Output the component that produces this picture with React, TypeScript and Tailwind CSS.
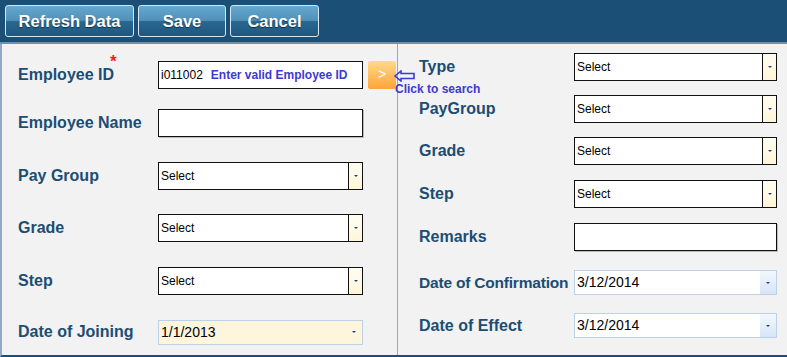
import React from 'react';

const font = "font-['Liberation_Sans',Arial,sans-serif]";

function ToolButton({ label, w }: { label: string; w: string }) {
  return (
    <button
      className={`${w} h-[32px] rounded-[3px] border border-[#d6e6f2] bg-[linear-gradient(to_bottom,#66a9ce_0%,#4f91ba_48%,#2a6790_52%,#1d577f_100%)] text-white text-[16.5px] font-bold [text-shadow:0_1px_1px_rgba(0,0,0,0.5)]`}
    >
      {label}
    </button>
  );
}

function Label({ text, star, size = 'text-[16px]' }: { text: string; star?: boolean; size?: string }) {
  return (
    <div className={`relative ${size} font-bold text-[#1c4d73] whitespace-nowrap`}>
      {text}
      {star && <span className="absolute -top-[14px] left-[92px] text-[#ff1a1a] text-[17px]">*</span>}
    </div>
  );
}

function SelectBox({ w }: { w: string }) {
  return (
    <div className={`${w} h-[28px] flex border border-[#111] bg-white`}>
      <div className="flex-1 flex items-center pl-[2px] text-[12px] text-black">Select</div>
      <div className="w-[14px] border-l border-[#111] bg-[linear-gradient(to_bottom,#fffdf2,#fff6d8)] flex items-center justify-center">
        <span className="block w-0 h-0 border-l-[2px] border-r-[2px] border-t-[2px] border-l-transparent border-r-transparent border-t-[#1c3f8a]" />
      </div>
    </div>
  );
}

function TextBox({ w }: { w: string }) {
  return <div className={`${w} h-[28px] border border-[#111] bg-white shadow-[1px_1px_0_#bbb]`} />;
}

function DateBox({ w, value, cream }: { w: string; value: string; cream?: boolean }) {
  return (
    <div className={`${w} h-[25px] flex border border-[#bcd0e6] ${cream ? 'bg-[#fdf6dc]' : 'bg-white'}`}>
      <div className="flex-1 flex items-center pl-[2px] text-[14px] text-black">{value}</div>
      <div className={`w-[16px] flex items-center justify-center ${cream ? '' : 'bg-[linear-gradient(to_bottom,#f4f8fd,#d6e5f7)]'}`}>
        <span className="block w-0 h-0 border-l-[2px] border-r-[2px] border-t-[2px] border-l-transparent border-r-transparent border-t-[#1c3f8a]" />
      </div>
    </div>
  );
}

export default function App() {
  return (
    <div className={`${font} w-[787px] h-[357px] overflow-hidden bg-[#f2f2f2] flex flex-col`}>
      <div className="h-[42px] bg-[#1b4f75] flex gap-[4px] pl-[5px] pt-[5px] shrink-0">
        <ToolButton label="Refresh Data" w="w-[129px]" />
        <ToolButton label="Save" w="w-[88px]" />
        <ToolButton label="Cancel" w="w-[89px]" />
      </div>
      <div className="h-[2px] bg-[#6b90b2] shrink-0" />
      <div className="flex-1 flex border-l-[2px] border-l-[#8ea9cc] border-b-[2px] border-b-[#1b4f75]">
        {/* left column */}
        <div className="relative w-[396px] border-r border-[#8ea9cc] pl-[16px] pt-[17px]">
          <div className="flex items-center h-[28px]">
            <div className="w-[140px]"><Label text="Employee ID" star /></div>
            <div className="w-[205px] h-[28px] flex items-center border border-[#111] bg-white pl-[2px]">
              <span className="text-[12px] text-black">i011002</span>
              <span className="ml-[8px] text-[12px] font-bold text-[#3b3bcf]">Enter valid Employee ID</span>
            </div>
            <div className="ml-[5px] w-[28px] h-[28px] rounded-[2px] bg-[linear-gradient(to_bottom,#ffd98a,#ffa43a)] flex items-center justify-center text-white text-[14px] pb-[2px]">
              &gt;
            </div>
          </div>
          <div className="absolute left-[392px] top-[26px] z-10">
            <svg width="22" height="12" viewBox="0 0 22 12">
              <path d="M1 6 L7 1 L7 3.5 L20 3.5 L20 8.5 L7 8.5 L7 11 Z" fill="none" stroke="#3b3bcf" strokeWidth="1.6" strokeLinejoin="miter" />
            </svg>
          </div>
          <div className="absolute left-[393px] top-[36px] z-10 text-[12px] font-bold text-[#3b3bcf] whitespace-nowrap">
            Click to search
          </div>
          <div className="flex items-center h-[28px] mt-[20px]">
            <div className="w-[140px]"><Label text="Employee Name" /></div>
            <TextBox w="w-[205px]" />
          </div>
          <div className="flex items-center h-[28px] mt-[25px]">
            <div className="w-[140px]"><Label text="Pay Group" /></div>
            <SelectBox w="w-[205px]" />
          </div>
          <div className="flex items-center h-[28px] mt-[24px]">
            <div className="w-[140px]"><Label text="Grade" /></div>
            <SelectBox w="w-[205px]" />
          </div>
          <div className="flex items-center h-[28px] mt-[25px]">
            <div className="w-[140px]"><Label text="Step" /></div>
            <SelectBox w="w-[205px]" />
          </div>
          <div className="flex items-center h-[26px] mt-[24px]">
            <div className="w-[140px]"><Label text="Date of Joining" /></div>
            <DateBox w="w-[205px]" value="1/1/2013" cream />
          </div>
        </div>
        {/* right column */}
        <div className="flex-1 pl-[21px] pt-[9px]">
          <div className="flex items-center h-[28px]">
            <div className="w-[155px]"><Label text="Type" /></div>
            <SelectBox w="w-[203px]" />
          </div>
          <div className="flex items-center h-[28px] mt-[14px]">
            <div className="w-[155px]"><Label text="PayGroup" /></div>
            <SelectBox w="w-[203px]" />
          </div>
          <div className="flex items-center h-[28px] mt-[14px]">
            <div className="w-[155px]"><Label text="Grade" /></div>
            <SelectBox w="w-[203px]" />
          </div>
          <div className="flex items-center h-[28px] mt-[15px]">
            <div className="w-[155px]"><Label text="Step" /></div>
            <SelectBox w="w-[203px]" />
          </div>
          <div className="flex items-center h-[28px] mt-[15px]">
            <div className="w-[155px]"><Label text="Remarks" /></div>
            <TextBox w="w-[203px]" />
          </div>
          <div className="flex items-center h-[25px] mt-[19px]">
            <div className="w-[155px]"><Label text="Date of Confirmation" size="text-[15.5px] tracking-[-0.2px]" /></div>
            <DateBox w="w-[203px]" value="3/12/2014" />
          </div>
          <div className="flex items-center h-[25px] mt-[18px]">
            <div className="w-[155px]"><Label text="Date of Effect" /></div>
            <DateBox w="w-[203px]" value="3/12/2014" />
          </div>
        </div>
      </div>
    </div>
  );
}
